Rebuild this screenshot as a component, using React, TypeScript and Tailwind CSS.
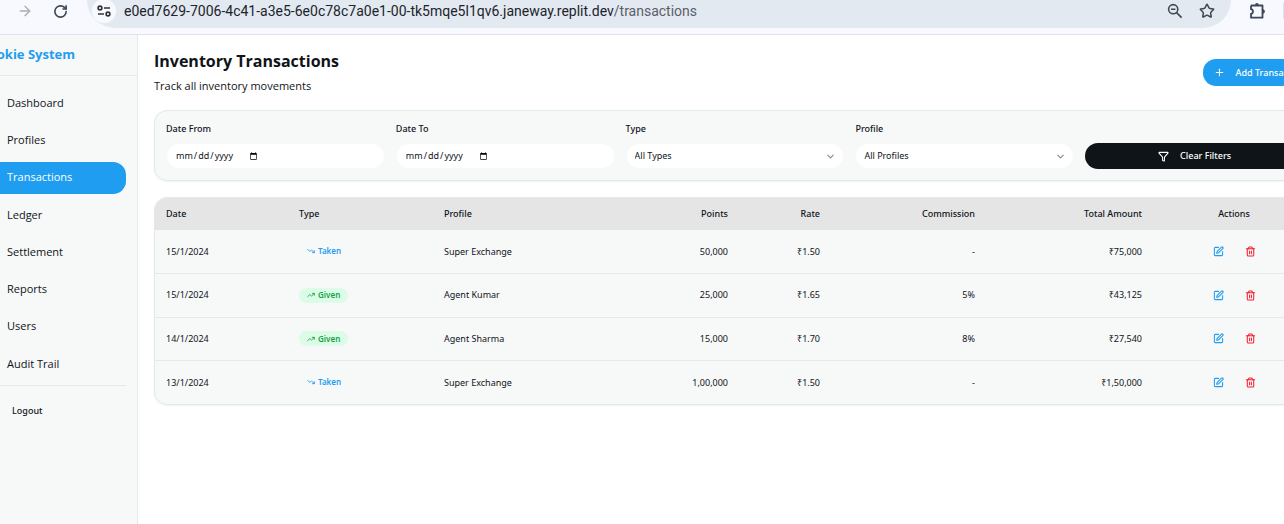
import type { ReactNode } from "react";
import {
  ArrowRight,
  ChevronDown,
  Filter,
  Plus,
  RotateCw,
  SquarePen,
  Star,
  Trash2,
  TrendingDown,
  TrendingUp,
} from "lucide-react";

type Transaction = {
  date: string;
  type: "Taken" | "Given";
  profile: string;
  points: string;
  rate: string;
  commission: string;
  total: string;
};

const transactions: Transaction[] = [
  { date: "15/1/2024", type: "Taken", profile: "Super Exchange", points: "50,000", rate: "₹1.50", commission: "-", total: "₹75,000" },
  { date: "15/1/2024", type: "Given", profile: "Agent Kumar", points: "25,000", rate: "₹1.65", commission: "5%", total: "₹43,125" },
  { date: "14/1/2024", type: "Given", profile: "Agent Sharma", points: "15,000", rate: "₹1.70", commission: "8%", total: "₹27,540" },
  { date: "13/1/2024", type: "Taken", profile: "Super Exchange", points: "1,00,000", rate: "₹1.50", commission: "-", total: "₹1,50,000" },
];

const navItems = ["Dashboard", "Profiles", "Transactions", "Ledger", "Settlement", "Reports", "Users", "Audit Trail"];

function BrowserBar() {
  return (
    <div className="flex h-[35px] shrink-0 items-start overflow-hidden border-b border-[#dfe1ee] bg-[#f8f9fe] font-['Roboto',sans-serif]">
      <div className="flex h-[22px] w-[87px] shrink-0 items-center gap-5 pl-[17px]">
        <button aria-label="Forward" className="text-[#a9acb0]">
          <ArrowRight size={16} strokeWidth={2} />
        </button>
        <button aria-label="Reload" className="text-[#3c4858]">
          <RotateCw size={15} strokeWidth={2.6} />
        </button>
      </div>
      <div className="flex h-7 min-w-0 flex-1 items-start rounded-b-full bg-[#e3e9f1]">
        <div className="flex h-[22px] w-full items-center pl-[5px] pr-4">
          <button aria-label="Site information" className="flex size-6 shrink-0 items-center justify-center rounded-full bg-[#f8f9fe]">
            <svg width="14" height="12" viewBox="0 0 14 12" fill="none" stroke="#2f3337" strokeWidth="1.6">
              <circle cx="3" cy="3" r="1.9" />
              <path d="M7 3h6M1 9h6" />
              <circle cx="11" cy="9" r="1.9" />
            </svg>
          </button>
          <p className="ml-2 flex-1 truncate text-[14px] leading-[22px] text-[#20242a]">
            e0ed7629-7006-4c41-a3e5-6e0c78c7a0e1-00-tk5mqe5l1qv6.janeway.replit.dev
            <span className="text-[#5a6068]">/transactions</span>
          </p>
          <div className="flex items-center gap-4 text-[#44484e]">
            <button aria-label="Zoom">
              <svg width="16" height="16" viewBox="0 0 16 16" fill="none" stroke="currentColor" strokeWidth="1.6">
                <circle cx="6.2" cy="6.2" r="4.6" />
                <path d="M4 6.2h4.4M9.6 9.6l5 5" />
              </svg>
            </button>
            <button aria-label="Bookmark">
              <Star size={16} strokeWidth={2.3} strokeLinejoin="miter" />
            </button>
          </div>
        </div>
      </div>
      <div className="flex h-[22px] w-[53px] shrink-0 items-center justify-between pl-[18px]">
        <button aria-label="Extensions" className="text-[#3c4858]">
          <svg width="18" height="18" viewBox="0 0 18 18" fill="none">
            <path
              d="M2 3.5h11.5v4.2M2 3.5v3.7c2.6.2 2.6 4.4 0 4.6v3.9h11.5v-4.2"
              stroke="currentColor"
              strokeWidth="1.8"
              strokeLinejoin="round"
            />
            <path d="M13.5 7v5" stroke="currentColor" strokeWidth="1.8" />
            <path d="M6 3a1.9 1.9 0 0 1 3.8 0zM14 7.6a1.9 1.9 0 0 1 0 3.8z" fill="currentColor" />
          </svg>
        </button>
        <span className="h-4 w-px bg-[#d3e3fd]" />
      </div>
    </div>
  );
}

function Sidebar() {
  return (
    <aside className="-ml-[34px] w-[172px] shrink-0 border-r border-[#e1eaef] bg-[#f7f8f8]">
      <div className="flex h-[41px] items-center border-b border-[#e1eaef] pl-[14px]">
        <h2 className="whitespace-nowrap text-[13px] font-bold text-[#1e9df1]">Bookie System</h2>
      </div>
      <div className="px-[11px] pt-[11px]">
        <nav className="flex h-[293px] flex-col justify-between">
          {navItems.map((item) => (
            <a
              key={item}
              href="#"
              className={
                item === "Transactions"
                  ? "flex h-8 items-center rounded-[13px] bg-[#1e9df1] pl-[30px] text-[11px] text-white"
                  : "flex h-8 items-center rounded-[13px] pl-[30px] text-[11px] text-[#0f1419]"
              }
            >
              {item}
            </a>
          ))}
        </nav>
        <div className="mt-[5px] border-t border-[#e1eaef] pt-[11px]">
          <button className="flex h-7 w-full items-center pl-[35px] font-['Noto_Sans',sans-serif] text-[9px] font-medium text-[#0f1419]">
            Logout
          </button>
        </div>
      </div>
    </aside>
  );
}

function DateField({ id, label }: { id: string; label: string }) {
  return (
    <div>
      <label htmlFor={id} className="mb-[7px] block text-[9px] font-medium leading-[14px]">
        {label}
      </label>
      <input
        id={id}
        type="date"
        className="flex h-[26px] w-full rounded-[13px] border border-[#f7f9fa] bg-white px-2 text-[9px] text-[#0f1419]"
      />
    </div>
  );
}

function SelectField({ id, label, option }: { id: string; label: string; option: string }) {
  return (
    <div>
      <label htmlFor={id} className="mb-[7px] block text-[9px] font-medium leading-[14px]">
        {label}
      </label>
      <div className="relative">
        <select
          id={id}
          className="block h-[26px] w-full appearance-none rounded-[13px] border border-[#f7f9fa] bg-white px-2 text-[9px] text-[#0f1419]"
        >
          <option>{option}</option>
        </select>
        <ChevronDown size={11} strokeWidth={2.4} className="pointer-events-none absolute right-2 top-2 opacity-50" />
      </div>
    </div>
  );
}

function TypeBadge({ type }: { type: Transaction["type"] }) {
  const taken = type === "Taken";
  return (
    <span
      className={
        taken
          ? "inline-flex h-[15px] items-center gap-[3px] rounded-full px-2 text-[8px] font-semibold text-[#1e9df1]"
          : "inline-flex h-[15px] items-center gap-[3px] rounded-full bg-[#dcfce7] px-2 text-[8px] font-semibold text-[#16a34a]"
      }
    >
      {taken ? <TrendingDown size={8} strokeWidth={2.6} /> : <TrendingUp size={8} strokeWidth={2.6} />}
      {type}
    </span>
  );
}

function HeadCell({ align = "left", children }: { align?: "left" | "right" | "center"; children: ReactNode }) {
  const styles = {
    left: "h-8 px-[11px] text-left font-medium",
    right: "h-8 px-[11px] text-right font-medium",
    center: "h-8 px-[11px] text-center font-medium",
  };
  return <th className={styles[align]}>{children}</th>;
}

function TransactionTable() {
  return (
    <div className="overflow-hidden rounded-[13px] border border-[#e1eaef] bg-[#f7f8f8] shadow-xs">
      <table className="w-full table-fixed font-['Noto_Sans',sans-serif] text-[9px]">
        <colgroup>
          <col className="w-[133px]" />
          <col className="w-[145px]" />
          <col className="w-[186px]" />
          <col className="w-[120px]" />
          <col className="w-[92px]" />
          <col className="w-[155px]" />
          <col className="w-[167px]" />
          <col className="w-[162px]" />
        </colgroup>
        <thead className="bg-[#e5e5e6]">
          <tr>
            <HeadCell>Date</HeadCell>
            <HeadCell>Type</HeadCell>
            <HeadCell>Profile</HeadCell>
            <HeadCell align="right">Points</HeadCell>
            <HeadCell align="right">Rate</HeadCell>
            <HeadCell align="right">Commission</HeadCell>
            <HeadCell align="right">Total Amount</HeadCell>
            <HeadCell align="center">Actions</HeadCell>
          </tr>
        </thead>
        <tbody>
          {transactions.map((t, i) => (
            <tr key={i} className="border-b border-[#e1eaef] last:border-0 odd:h-[43px] even:h-11">
              <td className="px-[11px]">{t.date}</td>
              <td className="px-[11px]">
                <div className="flex">
                  <TypeBadge type={t.type} />
                </div>
              </td>
              <td className="px-[11px]">{t.profile}</td>
              <td className="px-[11px] text-right">{t.points}</td>
              <td className="px-[11px] text-right">{t.rate}</td>
              <td className="px-[11px] text-right">{t.commission}</td>
              <td className="px-[11px] text-right">{t.total}</td>
              <td className="px-[11px]">
                <div className="flex justify-center gap-[21px]">
                  <button aria-label="Edit" className="text-[#1e9df1]">
                    <SquarePen size={11} strokeWidth={2.3} />
                  </button>
                  <button aria-label="Delete" className="text-[#f4212e]">
                    <Trash2 size={11} strokeWidth={2.3} />
                  </button>
                </div>
              </td>
            </tr>
          ))}
        </tbody>
      </table>
    </div>
  );
}

export default function App() {
  return (
    <div className="flex min-h-screen flex-col overflow-hidden bg-white font-['Open_Sans',sans-serif] text-[#0f1419]">
      <BrowserBar />
      <div className="flex flex-1">
        <Sidebar />
        <main className="-mr-8 flex min-w-0 flex-1 flex-col gap-4 pl-4 pt-4">
          <header className="flex items-center justify-between">
            <div>
              <h1 className="text-base font-bold leading-[21px]">Inventory Transactions</h1>
              <p className="mt-[6px] text-[11px] leading-4">Track all inventory movements</p>
            </div>
            <button className="flex h-[27px] items-center gap-[11px] whitespace-nowrap rounded-[13px] bg-[#1e9df1] px-[11px] font-['Noto_Sans',sans-serif] text-[9px] font-medium text-white">
              <Plus size={11} strokeWidth={2.3} />
              Add Transaction
            </button>
          </header>
          <section className="grid grid-cols-5 items-end gap-[11px] rounded-[13px] border border-[#e1eaef] bg-[#f7f8f8] p-[11px] font-['Noto_Sans',sans-serif] shadow-xs">
            <DateField id="date-from" label="Date From" />
            <DateField id="date-to" label="Date To" />
            <SelectField id="type" label="Type" option="All Types" />
            <SelectField id="profile" label="Profile" option="All Profiles" />
            <button className="flex h-[26px] items-center justify-center gap-[11px] rounded-[13px] bg-[#0f1419] text-[9px] font-medium text-white">
              <Filter size={11} strokeWidth={2.3} />
              Clear Filters
            </button>
          </section>
          <TransactionTable />
        </main>
      </div>
    </div>
  );
}
